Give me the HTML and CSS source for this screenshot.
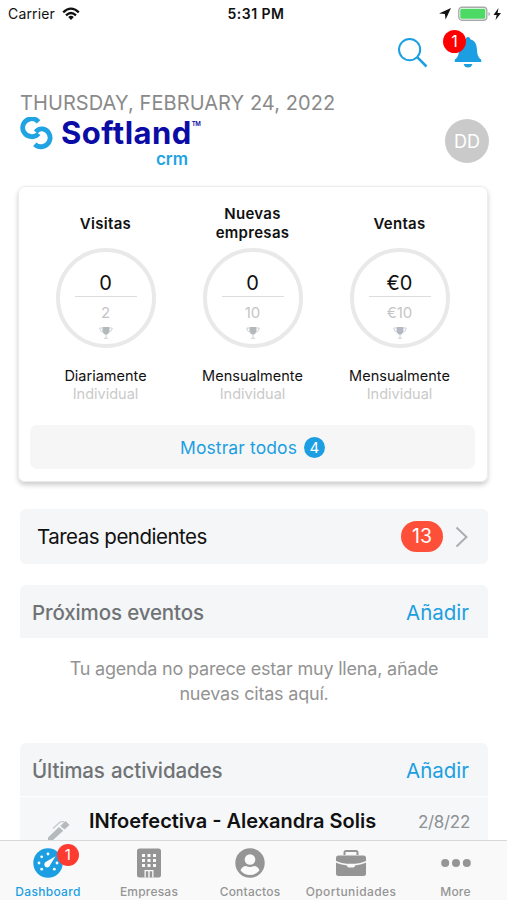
FILE: index.html
```html
<!DOCTYPE html>
<html lang="es">
<head>
<meta charset="utf-8">
<title>Softland CRM</title>
<link rel="stylesheet" href="styles.css">
</head>
<body>
<div class="phone">
  <div class="statusbar">
    <div class="status-left"><span class="carrier">Carrier</span>
      <svg class="wifi" width="18" height="14" viewBox="0 0 18 14"><g fill="none" stroke="#111" stroke-width="2.3"><path d="M1.2 5.3Q9-2 16.800 5.300"/><path d="M4 8.300Q9 3.700 14 8.300"/></g><path d="M6.200 10Q9 7.600 11.800 10L9 13z" fill="#111"/></svg>
    </div>
    <span class="clock">5:31 PM</span>
    <div class="status-right">
      <svg width="12" height="12" viewBox="0 0 12 12"><path d="M12 0L6.600 11.500L5.900 6.100L0 5.400z" fill="#111"/></svg>
      <svg width="44" height="16" viewBox="0 0 44 16"><rect x=".8" y="1.300" width="28" height="13" rx="3.200" fill="#fff" stroke="#aaa" stroke-width="1.400"/><rect x="2.300" y="2.800" width="25" height="10" rx="1.500" fill="#4cd964"/><path d="M30.500 6v4q1.500-.5 1.500-2t-1.500-2z" fill="#aaa"/><path d="M40.500 2L35.500 9h3.200L37.500 14L43 7h-3.400z" fill="#111"/></svg>
    </div>
  </div>
  <div class="toolbar">
    <svg width="32" height="32" viewBox="0 0 32 32" fill="none" stroke="#1c9fe2"><circle cx="12.600" cy="12.600" r="10.600" stroke-width="2"/><path d="M20.200 20.200L29.500 29.500" stroke-width="2.500"/></svg>
    <div class="bell">
      <svg width="28" height="32" viewBox="0 0 28 32" fill="#1c9fe2"><path d="M14 0C15.500 0 16.100 1 16.300 2.200C21.500 3.700 22.800 8 23 13C23.200 18 24.500 20.500 27 22.500Q28 25 26.500 25H1.500Q0 25 1 22.500C3.500 20.500 4.800 18 5 13C5.200 8 6.500 3.700 11.700 2.200C11.900 1 12.500 0 14 0z"/><path d="M9.700 27h8.600Q17.500 30.500 14 30.500T9.700 27z"/></svg>
      <span class="bell-count">1</span>
    </div>
  </div>
  <div class="date">THURSDAY, FEBRUARY 24, 2022</div>
  <div class="brand">
    <div class="logo">
      <svg width="35" height="34" viewBox="0 0 35 34" fill="none" stroke="#1fa3e3" stroke-width="4.800"><path d="M18.500 4.800A9 9 0 1 0 11.300 19.700Q16 20 18.500 16.600"/><path d="M14.800 27.200A9 9 0 1 0 22.700 11.900Q18.500 11.400 15.800 15"/></svg>
      <div class="wordmark">
        <div class="logo-name">Softland<span class="logo-tm">TM</span></div>
        <div class="logo-crm">crm</div>
      </div>
    </div>
    <div class="avatar">DD</div>
  </div>

  <section class="goals">
    <div class="goal-row">
      <div class="goal"><h3>Visitas</h3><div class="ring"><b>0</b><i>2</i><svg width="14" height="12" viewBox="0 0 14 12"><path d="M3.500 0h7v3.500Q10.500 7 7 7.800Q3.500 7 3.500 3.500z" fill="#b3b8bb"/><path d="M3.500 1H.7Q.7 4.500 4.500 5.500M10.500 1h2.800Q13.300 4.500 9.500 5.500M7 7v4M5 11.300h4" fill="none" stroke="#cdd2d5"/></svg></div><p>Diariamente</p><small>Individual</small></div>
      <div class="goal"><h3>Nuevas<br>empresas</h3><div class="ring"><b>0</b><i>10</i><svg width="14" height="12" viewBox="0 0 14 12"><path d="M3.500 0h7v3.500Q10.500 7 7 7.800Q3.500 7 3.500 3.500z" fill="#b3b8bb"/><path d="M3.500 1H.7Q.7 4.500 4.500 5.500M10.500 1h2.800Q13.300 4.500 9.500 5.500M7 7v4M5 11.300h4" fill="none" stroke="#cdd2d5"/></svg></div><p>Mensualmente</p><small>Individual</small></div>
      <div class="goal"><h3>Ventas</h3><div class="ring"><b>€0</b><i>€10</i><svg width="14" height="12" viewBox="0 0 14 12"><path d="M3.500 0h7v3.500Q10.500 7 7 7.800Q3.500 7 3.500 3.500z" fill="#b3b8c2"/><path d="M3.500 1H.7Q.7 4.500 4.500 5.500M10.500 1h2.800Q13.300 4.500 9.500 5.500M7 7v4M5 11.300h4" fill="none" stroke="#cdd2d8"/></svg></div><p>Mensualmente</p><small>Individual</small></div>
    </div>
    <div class="show-all"><span>Mostrar todos</span><em>4</em></div>
  </section>

  <div class="tasks">
    <span class="tasks-title">Tareas pendientes</span>
    <span class="tasks-count">13</span>
    <svg width="14" height="22" viewBox="0 0 14 22"><path d="M1.500 1.500L11.500 11L1.500 20.500" fill="none" stroke="#a9adb0" stroke-width="1.900"/></svg>
  </div>

  <div class="section-head events-head"><h2 class="t-events">Próximos eventos</h2><a>Añadir</a></div>
  <p class="empty"><span class="empty-1">Tu agenda no parece estar muy llena, añade</span><br><span class="empty-2">nuevas citas aquí.</span></p>

  <div class="section-head"><h2 class="t-acts">Últimas actividades</h2><a>Añadir</a></div>
  <div class="activity">
    <svg width="24" height="22" viewBox="0 0 24 22" fill="#b5babd"><path d="M17.500 0L21.500 4L16.500 8.500L12.300 5z"/><path d="M11 6L15.200 9.800L4 20L-.5 22L0 16.500z"/><path d="M5 7.500L12 1L16 .6" fill="none" stroke="#c2c7ca" stroke-width="1.200"/></svg>
    <span class="activity-name">INfoefectiva - Alexandra Solis</span>
    <span class="activity-date">2/8/22</span>
  </div>

  <nav class="tabs">
    <div class="tab active"><div class="tab-icon">
      <svg width="30" height="30" viewBox="0 0 30 30"><circle cx="15" cy="15" r="14.700" fill="#1c9fe2"/><g fill="#fff"><circle cx="6" cy="15" r="1.400"/><circle cx="8.700" cy="8.800" r="1.400"/><circle cx="15" cy="6" r="1.400"/><circle cx="24" cy="15" r="1.400"/><circle cx="8.700" cy="21.200" r="1.400"/><circle cx="21.300" cy="21.200" r="1.400"/><path d="M22.500 8.200L17.200 17A3 3 0 1 1 13.500 13.500z"/></g></svg>
      <span class="tab-count">1</span></div><span class="l1">Dashboard</span></div>
    <div class="tab"><div class="tab-icon"><svg width="24" height="30" viewBox="0 0 24 30"><rect x="0" y=".5" width="24" height="29" rx="2.500" fill="#959595"/><g fill="#fafafa"><path d="M5 6h3v3H5zM10.500 6h3v3h-3zM16 6h3v3h-3zM5 11h3v3H5zM10.500 11h3v3h-3zM16 11h3v3h-3zM5 16h3v3H5zM10.500 16h3v3h-3zM16 16h3v3h-3z"/><path d="M7.500 29.500V22h9v7.500h-1.300V23.300h-2.500v6.200h-1.400v-6.200H8.800v6.200z"/></g></svg></div><span class="l2">Empresas</span></div>
    <div class="tab"><div class="tab-icon"><svg width="30" height="30" viewBox="0 0 30 30"><circle cx="15" cy="15" r="14.700" fill="#959595"/><circle cx="15" cy="11.500" r="5.300" fill="#fafafa"/><path d="M5.500 22.500Q7 18.200 11 18Q15 20 19 18Q23 18.200 24.500 22.500Q20.500 27 15 27T5.500 22.500z" fill="#fafafa"/></svg></div><span class="l3">Contactos</span></div>
    <div class="tab"><div class="tab-icon"><svg width="30" height="28" viewBox="0 0 30 28" fill="#959595"><path d="M8.500 6V3.500Q8.500 2 10 2H20Q21.500 2 21.500 3.500V6" fill="none" stroke="#959595" stroke-width="2"/><path d="M2.500 6.500h25Q30 6.500 30 9V12Q24 14.500 19 14.800H11Q6 14.500 0 12V9Q0 6.500 2.500 6.500z"/><path d="M0 13.800Q5.500 16 11 16.500Q11 18.500 13 18.500H17Q19 18.500 19 16.500Q24.500 16 30 13.800V24.500Q30 27 27.500 27H2.500Q0 27 0 24.500z"/></svg></div><span class="l4">Oportunidades</span></div>
    <div class="tab"><div class="tab-icon"><svg width="30" height="30" viewBox="0 0 30 30" fill="#959595"><circle cx="4.200" cy="15" r="4"/><circle cx="15" cy="15" r="4"/><circle cx="25.800" cy="15" r="4"/></svg></div><span class="l5">More</span></div>
  </nav>
</div>
</body>
</html>
```
FILE: styles.css
```css
* { box-sizing: border-box; margin: 0; padding: 0; }
body { background: #fff; font-family: Inter, "Liberation Sans", sans-serif; color: #111; }
.phone { width: 507px; height: 900px; overflow: hidden; display: flex; flex-direction: column; position: relative; }
.phone > * { flex-shrink: 0; }
span, h2, h3, a, p { white-space: nowrap; }

.statusbar { height: 27px; display: grid; grid-template-columns: 1fr auto 1fr; align-items: center; padding: 0 5px 0 8px; }
.status-left { display: flex; align-items: center; gap: 7px; }
.carrier { font-size: 14px; letter-spacing: .15px; }
.clock { font-size: 14px; font-weight: 600; letter-spacing: .5px; margin-left: 2px; }
.status-right { display: flex; align-items: center; justify-content: flex-end; gap: 7px; }

.toolbar { height: 63px; display: flex; justify-content: flex-end; gap: 25px; padding: 10px 25px 0 0; }
.bell { position: relative; height: 32px; }
.bell-count { position: absolute; left: -11px; top: -7px; width: 23px; height: 23px; border-radius: 50%; background: #fe0000; color: #fff; font-size: 16px; line-height: 23px; text-align: center; }

.date { height: 26px; padding-left: 20px; font-size: 20px; line-height: 26px; letter-spacing: .08px; color: #8a8a8a; }
.brand { height: 70px; display: flex; justify-content: space-between; padding: 0 18px 0 20px; }
.logo { display: flex; padding-top: 1px; }
.wordmark { width: 134px; margin-left: 6px; }
.logo-name { display: flex; height: 32px; font-size: 31px; line-height: 32px; font-weight: 650; letter-spacing: .45px; color: #0b0ba5; }
.logo-tm { font-size: 6px; line-height: 8px; margin-top: 3px; letter-spacing: -.5px; font-weight: 600; }
.logo-crm { width: 127px; text-align: right; font-size: 17px; line-height: 20px; font-weight: 600; color: #1fa3e3; }
.avatar { width: 44px; height: 44px; border-radius: 50%; background: #cacaca; color: #fff; font-size: 18px; line-height: 45px; text-align: center; margin-top: 3px; }

.goals { margin: 0 19px 0 18px; height: 296px; border: 1px solid #ececec; border-radius: 7px; box-shadow: 0 3px 5px rgba(0,0,0,.2); padding: 14px 12px 0 11px; }
.goal-row { display: grid; grid-template-columns: repeat(3, 147px); margin-left: 2px; height: 224px; }
.goal { display: flex; flex-direction: column; align-items: center; }
.goal h3 { height: 44px; display: flex; align-items: center; text-align: center; font-size: 15px; line-height: 19px; font-weight: 600; letter-spacing: .3px; }
.ring { width: 100px; height: 100px; border: 4px solid #e9e9e9; border-radius: 50%; margin-top: 3px; display: flex; flex-direction: column; align-items: center; }
.ring b { width: 62px; height: 45px; padding-top: 18px; border-bottom: 1px solid #ddd; font-size: 20px; line-height: 26px; font-weight: 400; text-align: center; }
.ring i { font-style: normal; font-size: 15px; line-height: 20px; margin: 6px 0 4px; color: #c5c5c5; }
.goal p { font-size: 14.500px; line-height: 18px; margin-top: 19px; }
.goal small { font-size: 14.500px; line-height: 17px; color: #cacaca; }
.show-all { height: 44px; background: #f6f6f6; border-radius: 7px; display: flex; align-items: center; justify-content: center; gap: 7px; color: #1c9fe2; font-size: 17.500px; letter-spacing: .1px; }
.show-all em { width: 21px; height: 21px; border-radius: 50%; background: #1c9fe2; color: #fff; font-style: normal; font-size: 15px; line-height: 21px; text-align: center; }

.tasks { margin: 27px 19px 0 20px; height: 55px; background: #f4f6f7; border-radius: 6px; display: flex; align-items: center; padding: 0 19px 0 17px; }
.tasks-title { flex: 1; font-size: 20.500px; letter-spacing: -.5px; }
.tasks-count { width: 42px; height: 31px; border-radius: 16px; background: #fe4f38; color: #fff; font-size: 19.500px; line-height: 31px; text-align: center; margin-right: 12px; }

.section-head { margin: 0 19px 0 20px; height: 53px; background: #f4f6f7; border-radius: 6px 6px 0 0; display: flex; align-items: center; justify-content: space-between; padding: 2px 19px 0 12px; }
.events-head { margin-top: 21px; }
.section-head h2 { font-size: 20.500px; font-weight: 500; letter-spacing: -.13px; color: #707376; }
.t-acts { word-spacing: 1px; }
.section-head a { font-size: 20.500px; color: #1c9fe2; }
.empty { height: 105px; padding: 19px 0 0 1px; text-align: center; font-size: 18px; line-height: 24.500px; letter-spacing: -.2px; color: #939393; }
.activity { margin: 1px 19px 0 20px; height: 60px; background: #f5f7f9; display: flex; align-items: flex-start; padding: 0 18px 0 28px; }
.activity svg { margin-top: 24px; }
.activity-name { margin-left: 17px; flex: 1; font-size: 20px; font-weight: 600; line-height: 48px; }
.activity-date { font-size: 17px; line-height: 51px; letter-spacing: -.3px; color: #8e9193; }

.tabs { position: absolute; left: 0; right: 0; bottom: 0; height: 60px; border-top: 1px solid #d8d8d8; background: #f9f9f9; display: grid; grid-template-columns: 96px 106px 96px 106px 103px; }
.tab { display: flex; flex-direction: column; align-items: center; color: #959595; font-size: 12px; font-weight: 500; letter-spacing: .2px; }
.tab.active { color: #1c9fe2; }
.l1 { letter-spacing: .3px; }
.l4 { letter-spacing: .4px; }
.tab-icon { height: 30px; margin: 7px 0 6px; position: relative; display: flex; align-items: center; }
.tab-count { position: absolute; left: 24px; top: -4px; width: 22px; height: 22px; border-radius: 50%; background: #fe3b30; color: #fff; font-size: 15px; font-weight: 400; line-height: 22px; text-align: center; }
```
